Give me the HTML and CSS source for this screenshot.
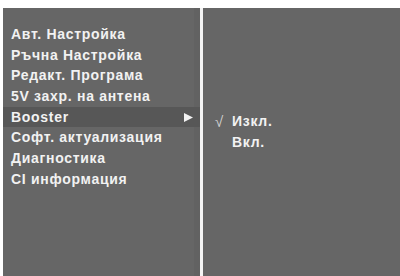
FILE: index.html
```html
<!DOCTYPE html>
<html>
<head>
<meta charset="utf-8">
<link rel="stylesheet" href="styles.css">
</head>
<body>
<div class="screen">
  <div class="panel menu">
    <div class="item">Авт. Настройка</div>
    <div class="item">Ръчна Настройка</div>
    <div class="item">Редакт. Програма</div>
    <div class="item">5V захр. на антена</div>
    <div class="item selected"><span>Booster</span><svg class="arrow" width="9" height="9" viewBox="0 0 9 9"><polygon points="0,0 9,4.5 0,9" fill="#f2f2f2"/></svg></div>
    <div class="item">Софт. актуализация</div>
    <div class="item">Диагностика</div>
    <div class="item">CI информация</div>
  </div>
  <div class="divider"></div>
  <div class="panel sub">
    <div class="opt"><span class="check">&#8730;</span><span>Изкл.</span></div>
    <div class="opt"><span class="check"></span><span>Вкл.</span></div>
  </div>
</div>
</body>
</html>
```
FILE: styles.css
```css
html, body {
  margin: 0;
  padding: 0;
  background: #ffffff;
}
.screen {
  width: 400px;
  height: 276px;
  padding: 8px 0 0 3px;
  box-sizing: border-box;
  display: flex;
  font-family: "Liberation Sans", Arial, sans-serif;
  font-weight: bold;
  font-size: 14px;
  letter-spacing: 0.7px;
  color: #f2f2f2;
}
.panel {
  background: #666666;
  height: 268px;
}
.menu {
  width: 197px;
  padding-top: 16px;
  box-sizing: border-box;
  box-shadow: inset -6px 0 0 #626262;
}
.divider {
  width: 3px;
  background: #f4f4f4;
}
.sub {
  flex: 1;
  padding-top: 103px;
  padding-left: 12px;
  box-sizing: border-box;
}
.item {
  height: 20.7px;
  line-height: 20.7px;
  padding-left: 8px;
  display: flex;
  align-items: center;
  justify-content: space-between;
}
.selected {
  background: #575757;
}
.arrow {
  margin-right: 7px;
}
.opt {
  height: 21px;
  line-height: 21px;
  display: flex;
}
.check {
  width: 17px;
  color: #cfcfcf;
  font-weight: normal;
  font-size: 15px;
  letter-spacing: 0;
}
```
